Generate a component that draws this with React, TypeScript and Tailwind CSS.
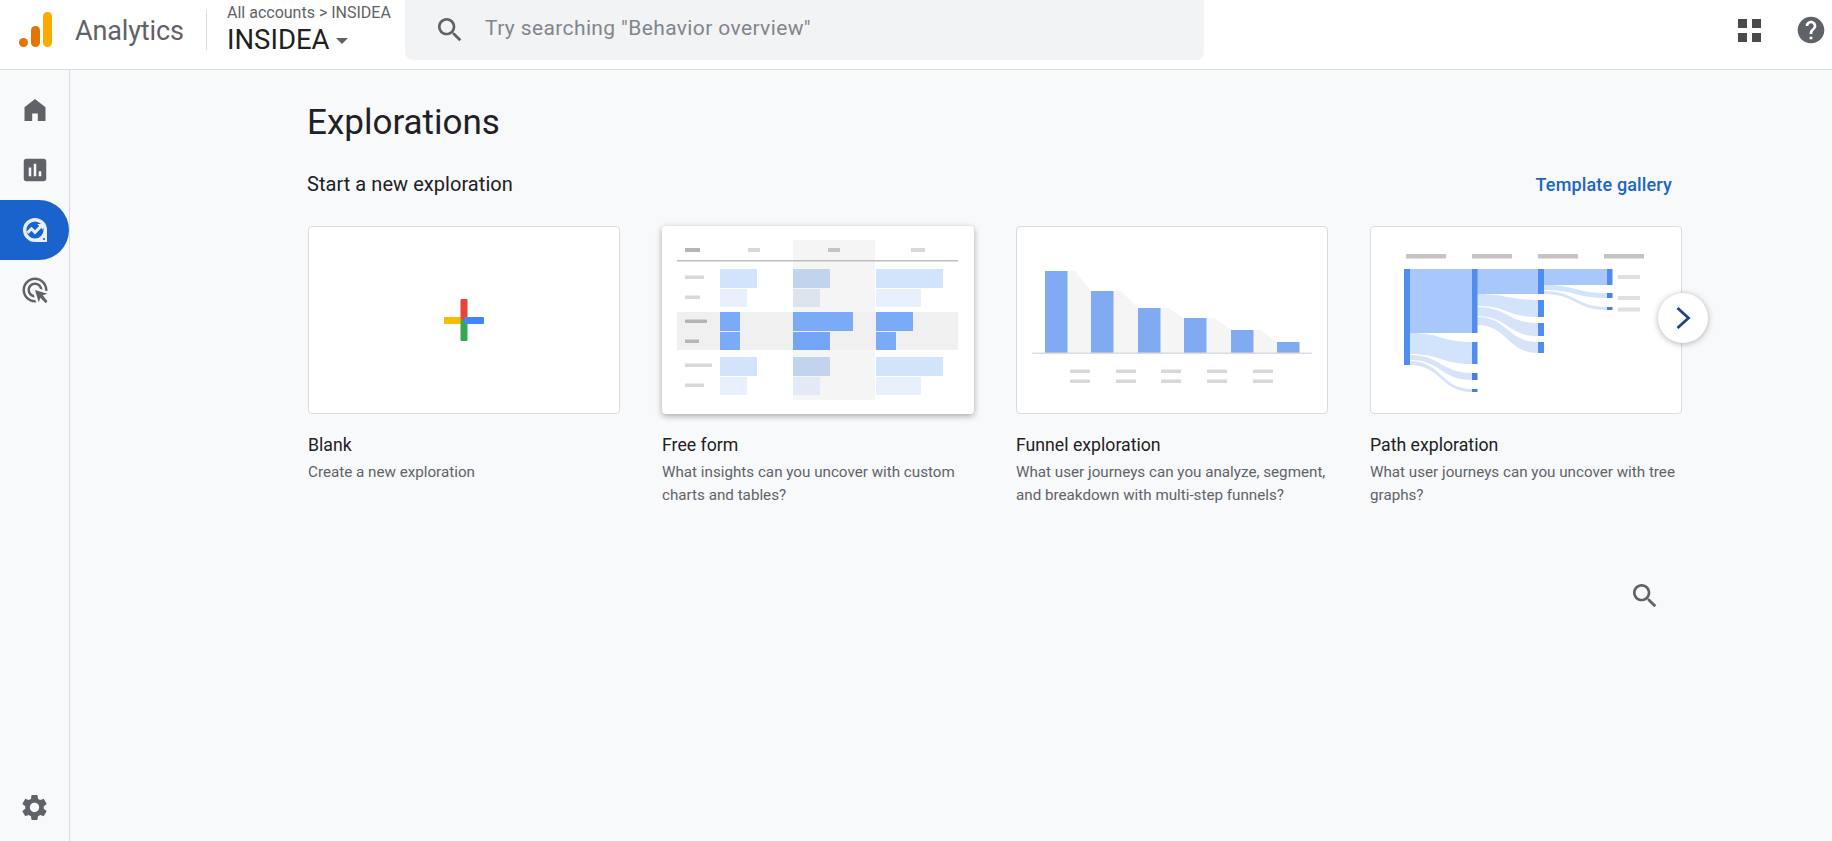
import { ReactNode } from "react";

const gsans = "font-['Roboto',sans-serif]";

const Icon = ({ d, size, className }: { d: string; size: number; className?: string }) => (
  <svg viewBox="0 0 24 24" width={size} height={size} className={className} fill="currentColor">
    <path d={d} />
  </svg>
);

const SEARCH =
  "M15.5 14h-.79l-.28-.27C15.41 12.59 16 11.11 16 9.5 16 5.91 13.09 3 9.5 3S3 5.91 3 9.5 5.91 16 9.5 16c1.61 0 3.09-.59 4.23-1.57l.27.28v.79l5 4.99L20.49 19l-4.99-5zm-6 0C7.01 14 5 11.99 5 9.5S7.01 5 9.5 5 14 7.01 14 9.5 11.99 14 9.5 14z";
const HELP =
  "M12 2C6.48 2 2 6.48 2 12s4.48 10 10 10 10-4.48 10-10S17.52 2 12 2zm1 17h-2v-2h2v2zm2.07-7.75l-.9.92C13.45 12.9 13 13.5 13 15h-2v-.5c0-1.1.45-2.1 1.17-2.83l1.24-1.26c.37-.36.59-.86.59-1.41 0-1.1-.9-2-2-2s-2 .9-2 2H8c0-2.21 1.79-4 4-4s4 1.79 4 4c0 .88-.36 1.68-.93 2.25z";
const SETTINGS =
  "M19.14 12.94c.04-.3.06-.61.06-.94 0-.32-.02-.64-.07-.94l2.03-1.58c.18-.14.23-.41.12-.61l-1.92-3.32c-.12-.22-.37-.29-.59-.22l-2.39.96c-.5-.38-1.03-.7-1.62-.94l-.36-2.54c-.04-.24-.24-.41-.48-.41h-3.84c-.24 0-.43.17-.47.41l-.36 2.54c-.59.24-1.13.57-1.62.94l-2.39-.96c-.22-.08-.47 0-.59.22L2.74 8.87c-.12.21-.08.47.12.61l2.03 1.58c-.05.3-.09.63-.09.94s.02.64.07.94l-2.03 1.58c-.18.14-.23.41-.12.61l1.92 3.32c.12.22.37.29.59.22l2.39-.96c.5.38 1.03.7 1.62.94l.36 2.54c.05.24.24.41.48.41h3.84c.24 0 .44-.17.47-.41l.36-2.54c.59-.24 1.13-.56 1.62-.94l2.39.96c.22.08.47 0 .59-.22l1.92-3.32c.12-.22.07-.47-.12-.61l-2.01-1.58zM12 15.6c-1.98 0-3.6-1.62-3.6-3.6s1.62-3.6 3.6-3.6 3.6 1.62 3.6 3.6-1.62 3.6-3.6 3.6z";
const HOME = "M12 2.5 3 9.6V21.5H9.6V15h4.8v6.5H21V9.6z";
const REPORTS =
  "M19 3H5c-1.1 0-2 .9-2 2v14c0 1.1.9 2 2 2h14c1.1 0 2-.9 2-2V5c0-1.1-.9-2-2-2zM9 17H7v-7h2v7zm4 0h-2V7h2v10zm4 0h-2v-4h2v4z";
const ADS =
  "M11.71,17.99C8.53,17.84,6,15.22,6,12c0-3.31,2.69-6,6-6c3.22,0,5.84,2.53,5.99,5.71l-2.1-0.63C15.48,9.31,13.89,8,12,8 c-2.21,0-4,1.79-4,4c0,1.89,1.31,3.48,3.08,3.89L11.71,17.99z M22,12c0,0.3-0.01,0.6-0.04,0.9l-1.97-0.59C20,12.21,20,12.1,20,12 c0-4.42-3.58-8-8-8s-8,3.58-8,8s3.58,8,8,8c0.1,0,0.21,0,0.31-0.01l0.59,1.97C12.6,21.99,12.3,22,12,22C6.48,22,2,17.52,2,12 C2,6.48,6.48,2,12,2S22,6.48,22,12z M18.23,16.26L22,15l-10-3l3,10l1.26-3.77l4.27,4.27l1.41-1.41L18.23,16.26z";

const Logo = () => (
  <svg width="36" height="38" viewBox="0 0 36 38" className="shrink-0">
    <circle cx="6.5" cy="31.5" r="4.5" fill="#e37400" />
    <rect x="14" y="15" width="9" height="21" rx="4.5" fill="#e37400" />
    <rect x="26" y="1" width="9" height="35" rx="4.5" fill="#f9ab00" />
  </svg>
);

const ExploreIcon = () => (
  <svg width="28" height="28" viewBox="0 0 28 28">
    <path d="M14 2a12 12 0 1 0 0 24h12V14A12 12 0 0 0 14 2z" fill="#e8f0fe" />
    <circle cx="14" cy="14" r="8.6" fill="#1a62cc" />
    <path d="M6.5 16.8 10.5 12.8 14 16.3 20.5 9.8" fill="none" stroke="#e8f0fe" strokeWidth="3" />
    <path d="M16.2 8H22V13.8z" fill="#e8f0fe" />
    <circle cx="23" cy="23" r="1.1" fill="#1a62cc" />
  </svg>
);

const NavItem = ({ children, active }: { children: ReactNode; active?: boolean }) => (
  <div
    className={
      active
        ? "flex h-[60px] w-[69px] items-center justify-center rounded-r-[30px] bg-[#1a62cc]"
        : "flex h-[60px] w-[69px] items-center justify-center text-[#5f6368]"
    }
  >
    {children}
  </div>
);

const PlusThumb = () => (
  <svg viewBox="0 0 40 42" width="40" height="42">
    <rect x="0" y="18" width="20" height="7" fill="#fbbc04" />
    <rect x="16.5" y="21" width="7" height="21" rx="1" fill="#34a853" />
    <rect x="16.5" y="0" width="7" height="21" rx="1" fill="#ea4335" />
    <rect x="20" y="18" width="20" height="7" rx="1" fill="#4285f4" />
  </svg>
);

// bordered cards lose a pixel each side, so the box is cropped instead of scaled
const Thumb = ({ children, box = "1 1 310 186" }: { children: ReactNode; box?: string }) => (
  <svg viewBox={box} width="100%" height="100%" className="blur-[0.4px]">
    {children}
  </svg>
);

const freeRows = [
  { y: 43, h: 19, w: [37, 37, 67], fill: "#d2e3fc", mid: "#c2d3ee" },
  { y: 63, h: 18, w: [27, 27, 45], fill: "#e8f0fe", mid: "#dde4f0" },
  { y: 86, h: 19, w: [20, 60, 37], fill: "#7baaf7", mid: "#7baaf7" },
  { y: 106, h: 18, w: [20, 37, 20], fill: "#7baaf7", mid: "#74a4f5" },
  { y: 131, h: 19, w: [37, 37, 67], fill: "#d2e3fc", mid: "#c2d3ee" },
  { y: 151, h: 18, w: [27, 27, 45], fill: "#e8f0fe", mid: "#e3e9f5" },
];
const freeLabels = [
  [51, 19, "#d8d8d8"],
  [71, 15, "#d8d8d8"],
  [95, 22, "#b5b5b5"],
  [115, 14, "#b5b5b5"],
  [139, 27, "#d8d8d8"],
  [159, 19, "#d8d8d8"],
] as const;

const FreeFormThumb = () => (
  <Thumb box="0 0 312 188">
    <rect x="131" y="14" width="82" height="160" fill="#f5f5f5" />
    <rect x="15" y="86" width="281" height="38" fill="#f0f0f0" />
    <rect x="23" y="22" width="15" height="4" fill="#b5b5b5" />
    <rect x="86" y="22" width="12" height="4" fill="#d8d8d8" />
    <rect x="166" y="22" width="12" height="4" fill="#c4c4c4" />
    <rect x="249" y="22" width="14" height="4" fill="#d8d8d8" />
    <rect x="15" y="34" width="281" height="1.5" fill="#bdbdbd" />
    {freeLabels.map(([y, w, fill]) => (
      <rect key={y} x="23" y={y - 1.5} width={w} height="3.5" fill={fill} />
    ))}
    {freeRows.map((r) => (
      <g key={r.y}>
        <rect x="58" y={r.y} width={r.w[0]} height={r.h} fill={r.fill} />
        <rect x="131" y={r.y} width={r.w[1]} height={r.h} fill={r.mid} />
        <rect x="214" y={r.y} width={r.w[2]} height={r.h} fill={r.fill} />
      </g>
    ))}
  </Thumb>
);

const funnelBars = [
  [29, 45],
  [75, 65],
  [122, 82],
  [168, 92],
  [215, 104],
  [261, 116],
];

const FunnelThumb = () => (
  <Thumb>
    {funnelBars.slice(0, 5).map(([x, top], i) => {
      const [nextX, nextTop] = funnelBars[i + 1];
      return (
        <path
          key={x}
          d={`M${x + 22} ${top}H${x + 30}L${nextX} ${nextTop}V127H${x + 22}z`}
          fill="#f5f5f5"
        />
      );
    })}
    {funnelBars.map(([x, top]) => (
      <rect key={x} x={x} y={top} width="22.5" height={127 - top} fill="#80aaf2" />
    ))}
    <rect x="16" y="126.5" width="280" height="1.5" fill="#dadce0" />
    {[54, 100, 145, 191, 237].map((x) => (
      <g key={x} fill="#d8d8d8">
        <rect x={x} y="143.5" width="20" height="3.5" />
        <rect x={x} y="153.5" width="20" height="3.5" />
      </g>
    ))}
  </Thumb>
);

const flow = (x1: number, x2: number, a1: number, a2: number, b1: number, b2: number) => {
  const m = (x1 + x2) / 2;
  return `M${x1} ${a1}C${m} ${a1} ${m} ${b1} ${x2} ${b1}V${b2}C${m} ${b2} ${m} ${a2} ${x1} ${a2}z`;
};

const PathThumb = () => (
  <Thumb>
    {[36, 102, 168, 234].map((x) => (
      <rect key={x} x={x} y="28" width="40" height="4.5" fill="#c4c4c4" />
    ))}
    <g fill="#a8c7fa">
      <rect x="40" y="43" width="62" height="64" />
      <rect x="107" y="43" width="61" height="25" />
      <rect x="174" y="43" width="63" height="16" />
    </g>
    <g fill="#d2e3fc">
      <path d={flow(40, 102, 107, 128, 116, 138)} />
      <path d={flow(107, 168, 68, 80, 74, 91)} />
      <path d={flow(174, 237, 59, 64, 67, 72)} />
    </g>
    <g fill="#d7e3f8">
      <path d={flow(40, 102, 129, 134, 147, 154)} />
      <path d={flow(40, 102, 135, 139, 163, 166)} />
      <path d={flow(107, 168, 81, 90, 97, 110)} />
      <path d={flow(107, 168, 91, 99, 116, 127)} />
      <path d={flow(174, 237, 65, 68, 81, 84)} />
    </g>
    <g fill="#4f8df0">
      <rect x="34" y="43" width="6" height="96" />
      <rect x="102" y="43" width="5.5" height="64" />
      <rect x="102" y="116" width="5.5" height="22" />
      <rect x="102" y="147" width="5.5" height="7" fill="#4a7fe0" />
      <rect x="102" y="163" width="5.5" height="3" fill="#4a7fe0" />
      <rect x="168" y="43" width="6" height="25" />
      <rect x="168" y="74" width="6" height="17" />
      <rect x="168" y="97" width="6" height="13" />
      <rect x="168" y="116" width="6" height="11" />
      <rect x="237" y="43" width="5.5" height="16" />
      <rect x="237" y="67" width="5.5" height="5" fill="#4a7fe0" />
      <rect x="237" y="81" width="5.5" height="3" fill="#4a7fe0" />
    </g>
    <g fill="#e0e0e0">
      <rect x="248" y="49" width="22" height="4" />
      <rect x="248" y="70" width="22" height="4" />
      <rect x="248" y="81.5" width="22" height="4" />
    </g>
  </Thumb>
);

const templates = [
  { title: "Blank", desc: "Create a new exploration", thumb: <PlusThumb /> },
  {
    title: "Free form",
    desc: "What insights can you uncover with custom charts and tables?",
    thumb: <FreeFormThumb />,
    raised: true,
  },
  {
    title: "Funnel exploration",
    desc: "What user journeys can you analyze, segment, and breakdown with multi-step funnels?",
    thumb: <FunnelThumb />,
  },
  {
    title: "Path exploration",
    desc: "What user journeys can you uncover with tree graphs?",
    thumb: <PathThumb />,
  },
];

export default function App() {
  return (
    <div className={`flex h-screen w-full flex-col overflow-hidden bg-[#f8f9fb] ${gsans}`}>
      <header className="flex h-[70px] shrink-0 items-start border-b border-[#dadce0] bg-white">
        <div className="flex h-[60px] w-[206px] items-center pl-[17px]">
          <Logo />
          <span className="ml-[22px] mt-[2px] text-[27px] tracking-[-0.15px] text-[#5f6368]">Analytics</span>
        </div>
        <div className="mt-[10px] h-10 w-px bg-[#dadce0]" />
        <div className="ml-5 w-[178px]">
          <div className="mt-[3px] flex h-5 items-center text-[16px] text-[#5f6368]">All accounts &gt; INSIDEA</div>
          <div className="mt-[1px] flex h-[32px] items-center text-[27.5px] text-[#202124]">
            INSIDEA
            <span className="ml-[6px] mt-[2px] h-0 w-0 border-x-[6px] border-t-[6px] border-x-transparent border-t-[#5f6368]" />
          </div>
        </div>
        <div className="flex h-[60px] w-[799px] items-center rounded-b-lg bg-[#f1f3f4] pl-[29px] text-[#5f6368]">
          <Icon d={SEARCH} size={32} />
          <span className="-mt-[2px] ml-[19px] text-[21px] tracking-[0.38px] text-[#80868b]">Try searching "Behavior overview"</span>
        </div>
        <div className="ml-auto mr-[5px] flex h-[60px] items-center gap-[34px]">
          <div className="grid grid-cols-2 gap-[5px]">
            <span className="h-[9px] w-[9px] bg-[#4a4a4a]" />
            <span className="h-[9px] w-[9px] bg-[#4a4a4a]" />
            <span className="h-[9px] w-[9px] bg-[#4a4a4a]" />
            <span className="h-[9px] w-[9px] bg-[#4a4a4a]" />
          </div>
          <Icon d={HELP} size={32} className="text-[#5f6368]" />
        </div>
      </header>

      <div className="flex min-h-0 flex-1">
        <aside className="flex w-[70px] shrink-0 flex-col border-r border-[#dadce0] pt-[10px]">
          <NavItem><Icon d={HOME} size={28} /></NavItem>
          <NavItem><Icon d={REPORTS} size={30} /></NavItem>
          <NavItem active><ExploreIcon /></NavItem>
          <NavItem><Icon d={ADS} size={30} /></NavItem>
          <div className="mb-1 mt-auto">
            <NavItem><Icon d={SETTINGS} size={31} /></NavItem>
          </div>
        </aside>

        <main className="relative flex-1 pl-[238px] pt-[33px]">
          <h1 className="-ml-px h-10 text-[35px] leading-10 text-[#202124]">Explorations</h1>
          <div className="mt-[27px] flex h-7 w-[1364px] items-center justify-between">
            <h2 className="-ml-px text-[20px] tracking-[0.05px] text-[#202124]">Start a new exploration</h2>
            <a className="text-[18px] font-medium tracking-[0.15px] text-[#1a66c4]">Template gallery</a>
          </div>
          <div className="mt-7 flex gap-[42px]">
            {templates.map((t) => (
              <div key={t.title} className="w-[312px] shrink-0">
                <div
                  className={
                    t.raised
                      ? "flex h-[188px] items-center justify-center overflow-hidden rounded bg-white shadow-[0_2px_6px_rgba(60,64,67,0.45)]"
                      : "flex h-[188px] items-center justify-center overflow-hidden rounded border border-[#dadce0] bg-white"
                  }
                >
                  {t.thumb}
                </div>
                <div className="mt-[19px] text-[17.7px] leading-6 text-[#202124]">{t.title}</div>
                <p className="mt-1 text-[15.2px] leading-[23px] text-[#5f6368]">{t.desc}</p>
              </div>
            ))}
          </div>

          <button className="absolute left-[1588px] top-[223px] flex h-[50px] w-[50px] items-center justify-center rounded-full bg-white shadow-[0_1px_6px_rgba(60,64,67,0.4)]">
            <svg width="20" height="26" viewBox="0 0 20 26" fill="none" stroke="#1c4587" strokeWidth="2.8">
              <path d="M4.5 3l11 10-11 10" />
            </svg>
          </button>
          <Icon d={SEARCH} size={32} className="absolute left-[1559px] top-[510px] text-[#5f6368]" />
        </main>
      </div>
    </div>
  );
}
